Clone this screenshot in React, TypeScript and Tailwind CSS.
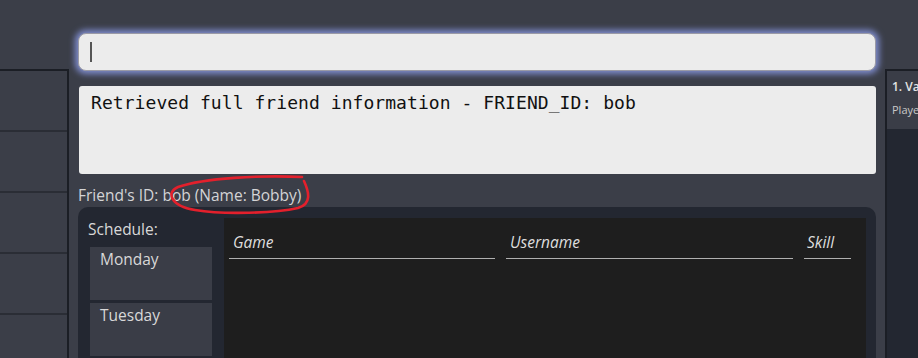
import React from 'react';

const days = ['Monday', 'Tuesday'];

const App: React.FC = () => {
    return (
        <div className="relative flex h-[358px] w-[918px] overflow-hidden bg-[#3b3e48] font-['Open_Sans',sans-serif] text-[#d6d6d6]">
            {/* left list */}
            <div className="mt-[69px] w-[69px] shrink-0 border-t-2 border-r-2 border-[#1b1e25]">
                {[0, 1, 2, 3, 4].map((i) => (
                    <div key={i} className="h-[61px] border-b-2 border-[#2a2d35]" />
                ))}
            </div>

            {/* center */}
            <div className="flex w-[807px] shrink-0 flex-col pl-[9px] pt-[33px]">
                <div className="flex h-[38px] shrink-0 items-center rounded-[8px] border border-[#9a9aa6] bg-[#ececec] pl-[11px] shadow-[0_0_6px_3px_rgba(140,155,230,0.85)]">
                    <div className="h-[20px] w-[2px] bg-[#555]" />
                </div>
                <div className="mt-[15px] ml-px h-[88px] shrink-0 rounded-[3px] bg-[#ececec] px-[12px] pt-[4px] font-['DejaVu_Sans_Mono',monospace] text-[18px] leading-[26px] tracking-[0.06px] text-[#111]">
                    Retrieved full friend information - FRIEND_ID: bob
                </div>
                <div className="mt-[10px] shrink-0 text-[15.5px] leading-[22px] text-[#d4d4d6]">Friend's ID: bob (Name: Bobby)</div>
                <div className="mt-px flex h-[160px] shrink-0 gap-[12px] rounded-[10px] bg-[#232731] pl-[10px] pr-[10px] pt-[11px]">
                    <div className="w-[124px] shrink-0">
                        <div className="text-[15.5px] leading-[22px] text-[#d8d8d8]">Schedule:</div>
                        <div className="mt-[7px] ml-[2px] flex flex-col gap-[3px]">
                            {days.map((d) => (
                                <div key={d} className="h-[53px] bg-[#3a3d47] px-[10px] pt-[1px] text-[15.5px] leading-[22px] text-[#d8d8d8]">
                                    {d}
                                </div>
                            ))}
                        </div>
                    </div>
                    <div className="flex flex-1 gap-[11px] bg-[#1e1e1e] px-[5px] pt-[13px] font-medium italic">
                        <div className="h-[28px] w-[266px] border-b border-[#b0b0b0] pl-[4px] text-[15.5px] leading-[22px] text-[#dedede]">Game</div>
                        <div className="h-[28px] w-[287px] border-b border-[#b0b0b0] pl-[4px] text-[15.5px] leading-[22px] text-[#dedede]">Username</div>
                        <div className="h-[28px] w-[47px] border-b border-[#b0b0b0] pl-[3px] text-[15.5px] leading-[22px] text-[#dedede]">Skill</div>
                    </div>
                </div>
            </div>

            {/* right list */}
            <div className="ml-[9px] mt-[69px] flex-1 overflow-hidden border-l-2 border-t-2 border-[#1b1e25] bg-[#232731]">
                <div className="h-[58px] bg-[#3a3d47] pl-[5px] pt-[6px] whitespace-nowrap">
                    <div className="text-[12px] font-semibold leading-[20px] text-[#e4e4e4]">1. Va</div>
                    <div className="mt-[5px] text-[11px] leading-[16px] text-[#c8c8c8]">Playe</div>
                </div>
            </div>

            {/* red annotation */}
            <svg className="pointer-events-none absolute left-0 top-0" width="918" height="358" viewBox="0 0 918 358">
                <path
                    d="M302 177 C 260 175, 205 178, 178 187 C 166 192, 170 206, 195 210 C 225 215, 275 213, 298 208 C 312 204, 309 192, 304 181"
                    fill="none"
                    stroke="#e3202c"
                    strokeWidth="2.6"
                    strokeLinecap="round"
                />
            </svg>
        </div>
    );
};

export default App;
